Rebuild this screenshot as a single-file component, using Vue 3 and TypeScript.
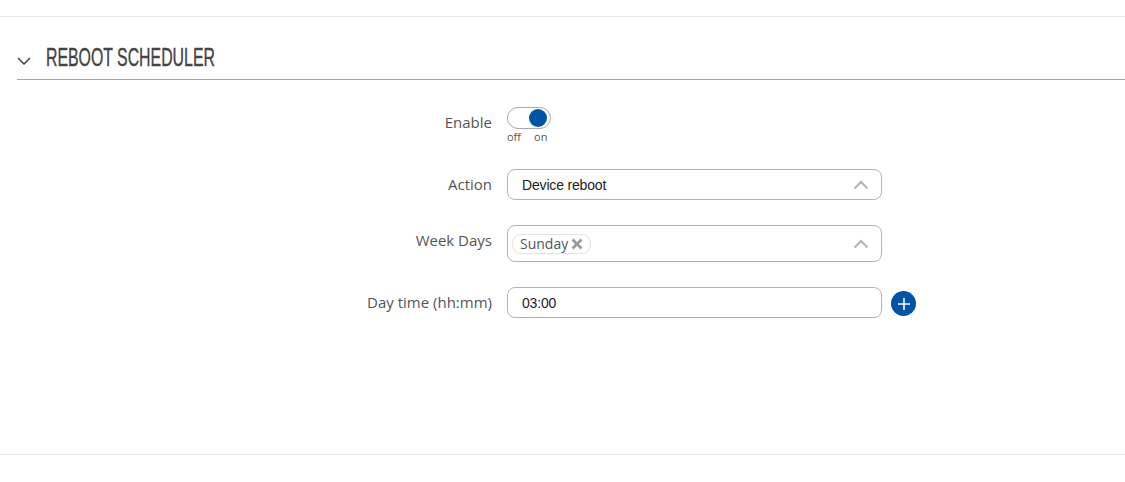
<script setup lang="ts">
const days = ["Sunday"];
</script>

<template>
	<div class="page">
		<section class="panel">
			<header class="head">
				<svg class="collapse" width="14" height="8" viewBox="0 0 14 8">
					<path d="M1 1l6 6 6-6" fill="none" stroke="#444" stroke-width="1.5" />
				</svg>
				<h2 class="title"><span>REBOOT SCHEDULER</span></h2>
			</header>

			<div class="form">
				<div class="row row-enable">
					<label class="label">Enable</label>
					<div class="switch-wrap">
						<div class="switch"><span class="knob" /></div>
						<div class="switch-text"><span>off</span><span>on</span></div>
					</div>
				</div>

				<div class="row row-action">
					<label class="label">Action</label>
					<div class="control">
						<span class="value">Device reboot</span>
						<svg class="chev" width="16" height="10" viewBox="0 0 16 10">
							<path d="M1.5 8.5L8 2l6.5 6.5" fill="none" stroke="#b4b4b4" stroke-width="2" />
						</svg>
					</div>
				</div>

				<div class="row row-days">
					<label class="label">Week Days</label>
					<div class="control control-tall">
						<span v-for="day in days" :key="day" class="tag">
							{{ day }}
							<svg width="12" height="12" viewBox="0 0 12 12">
								<path d="M1.5 1.5l9 9M10.5 1.5l-9 9" stroke="#999" stroke-width="2.8" />
							</svg>
						</span>
						<svg class="chev" width="16" height="10" viewBox="0 0 16 10">
							<path d="M1.5 8.5L8 2l6.5 6.5" fill="none" stroke="#b4b4b4" stroke-width="2" />
						</svg>
					</div>
				</div>

				<div class="row row-time">
					<label class="label">Day time (hh:mm)</label>
					<div class="control">
						<span class="value">03:00</span>
					</div>
					<button class="add" type="button" aria-label="Add">
						<svg width="14" height="14" viewBox="0 0 14 14">
							<path d="M7 1v12M1 7h12" stroke="#fff" stroke-width="1.6" />
						</svg>
					</button>
				</div>
			</div>
		</section>
		<div class="bottom-line" />
	</div>
</template>

<style scoped>
.page {
	width: 1125px;
	height: 482px;
	box-sizing: border-box;
	padding-top: 16px;
	background: #fff;
	overflow: hidden;
}

.panel {
	height: 438px;
	box-sizing: border-box;
	border-top: 1px solid #e6e6e6;
	padding-left: 17px;
}

.head {
	display: flex;
	align-items: center;
	height: 63px;
	box-sizing: border-box;
	border-bottom: 1px solid #a6a6a6;
	padding-top: 20px;
}

.collapse {
	flex: none;
	margin-top: 6px;
}

.title {
	margin: -2px 0 0 15px;
	font-family: "Liberation Sans", sans-serif;
	font-size: 26px;
	font-weight: 400;
	line-height: 30px;
	color: #444;
	white-space: nowrap;
	-webkit-text-stroke: 0.4px #444;
}

.title span {
	display: inline-block;
	transform: scaleX(0.61);
	transform-origin: left center;
}

.form {
	display: flex;
	flex-direction: column;
}

.row {
	display: flex;
	align-items: flex-start;
}

.row-enable {
	height: 63px;
	padding-top: 27px;
}

.row-action {
	height: 31px;
	margin-top: -1px;
}

.row-days {
	height: 37px;
	margin-top: 25px;
}

.row-time {
	height: 31px;
	margin-top: 25px;
}

.label {
	width: 475px;
	flex: none;
	margin-right: 15px;
	text-align: right;
	font-family: "Open Sans", sans-serif;
	font-size: 15px;
	line-height: 31px;
	color: #555;
}

.row-enable .label {
	line-height: 30px;
}

.switch-wrap {
	width: 44px;
}

.switch {
	width: 44px;
	height: 22px;
	box-sizing: border-box;
	border: 1px solid #aaa;
	border-radius: 11px;
	position: relative;
}

.knob {
	position: absolute;
	right: 3px;
	top: 1px;
	width: 18px;
	height: 18px;
	border-radius: 50%;
	background: #0054a6;
}

.switch-text {
	display: flex;
	gap: 13px;
	margin-top: 1px;
	font-family: "Open Sans", sans-serif;
	font-size: 11px;
	line-height: 14px;
	color: #555;
}

.control {
	position: relative;
	display: flex;
	align-items: center;
	width: 375px;
	height: 31px;
	box-sizing: border-box;
	border: 1px solid #b3b3b3;
	border-radius: 8px;
	padding-left: 14px;
}

.control-tall {
	height: 37px;
	padding-left: 4px;
}

.value {
	font-family: "Liberation Sans", Arial, sans-serif;
	font-size: 14px;
	letter-spacing: -0.17px;
	color: #222;
}

.chev {
	position: absolute;
	right: 12px;
	top: 50%;
	margin-top: -5px;
}

.tag {
	display: inline-flex;
	align-items: center;
	gap: 3px;
	height: 20px;
	box-sizing: border-box;
	border: 1px solid #e2e2e2;
	border-radius: 9px;
	padding: 0 7px 0 7px;
	font-family: "Open Sans", sans-serif;
	font-size: 14px;
	color: #555;
}

.add {
	display: flex;
	align-items: center;
	justify-content: center;
	width: 25px;
	height: 25px;
	margin: 4px 0 0 9px;
	padding: 0;
	border: none;
	border-radius: 50%;
	background: #0054a6;
}

.bottom-line {
	border-top: 1px solid #e6e6e6;
}
</style>
